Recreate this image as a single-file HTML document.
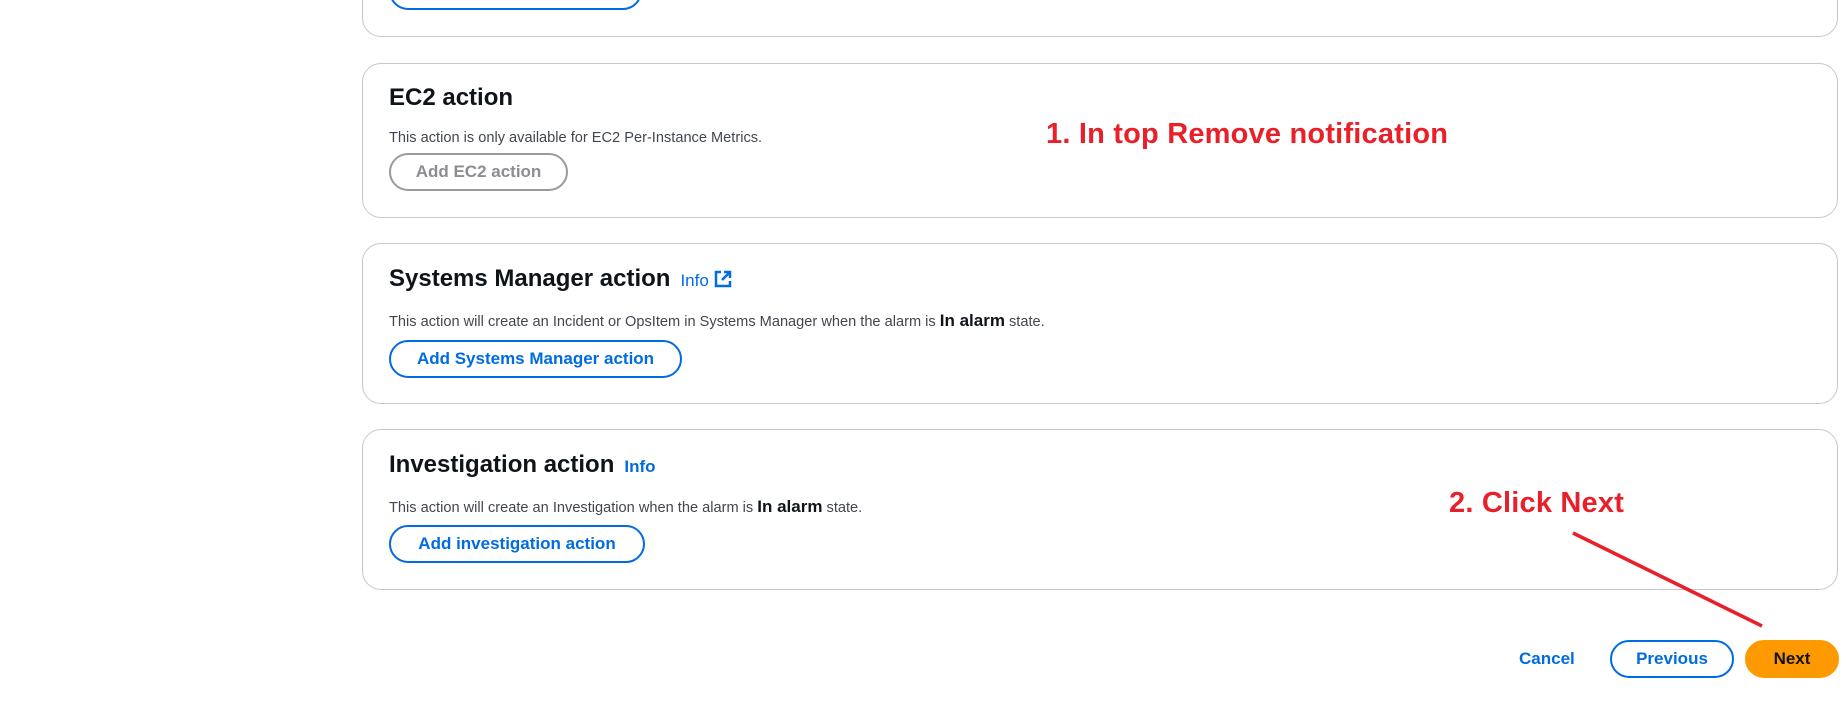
<!DOCTYPE html>
<html><head><style>
body{margin:0;width:1847px;height:702px;background:#fff;position:relative;overflow:hidden;font-family:"Liberation Sans",sans-serif;}
.card{position:absolute;left:362px;width:1476px;border:1px solid #c6c6cd;border-radius:19px;box-sizing:border-box;background:#fff;}
.h{position:absolute;left:389px;font-size:24px;font-weight:bold;color:#0f141a;}
.d{position:absolute;left:389px;font-size:14.6px;color:#424650;}
.d b{color:#0f141a;font-size:17px;}
.btn{position:absolute;left:389px;height:38px;border:2px solid #006ce0;border-radius:20px;box-sizing:border-box;color:#006ce0;font-weight:bold;font-size:17px;line-height:34px;text-align:center;}
.info{color:#006ce0;font-size:17px;font-weight:normal;margin-left:10px;}
.red{position:absolute;color:#e8202a;font-weight:bold;font-size:29px;letter-spacing:0.2px;}
</style></head><body>
<div class="card" style="top:-30px;height:67px"></div>
<div class="btn" style="top:-28px;width:253px"></div>
<div class="card" style="top:63px;height:155px"></div>
<div class="h" style="top:84px">EC2 action</div>
<div class="d" style="top:130px">This action is only available for EC2 Per-Instance Metrics.</div>
<div class="btn" style="top:153px;width:179px;border-color:#9a9aa1;color:#8c8c94">Add EC2 action</div>
<div class="card" style="top:243px;height:161px"></div>
<div class="h" style="top:265px">Systems Manager action<span class="info">Info <svg width="18" height="18" viewBox="0 0 18 18" style="vertical-align:-2px"><path d="M7 2H2v14h14v-5" fill="none" stroke="#006ce0" stroke-width="2.5"/><path d="M10 2h6v6M16 2L8 10" fill="none" stroke="#006ce0" stroke-width="2.5"/></svg></span></div>
<div class="d" style="top:311px">This action will create an Incident or OpsItem in Systems Manager when the alarm is <b>In alarm</b> state.</div>
<div class="btn" style="top:340px;width:293px">Add Systems Manager action</div>
<div class="card" style="top:429px;height:161px"></div>
<div class="h" style="top:451px">Investigation action<span class="info" style="font-weight:bold;margin-left:10px">Info</span></div>
<div class="d" style="top:497px">This action will create an Investigation when the alarm is <b>In alarm</b> state.</div>
<div class="btn" style="top:525px;width:256px">Add investigation action</div>
<div style="position:absolute;left:1519px;top:649px;font-weight:bold;font-size:17px;color:#006ce0">Cancel</div>
<div class="btn" style="left:1610px;top:640px;width:124px;height:38px">Previous</div>
<div class="btn" style="left:1745px;top:640px;width:94px;height:38px;background:#ff9900;border-color:#ff9900;color:#0f141a">Next</div>
<div class="red" style="left:1046px;top:118px">1. In top Remove notification</div>
<div class="red" style="left:1449px;top:487px">2. Click Next</div>
<svg style="position:absolute;left:0;top:0" width="1847" height="702"><line x1="1573" y1="533" x2="1762" y2="626" stroke="#e8202a" stroke-width="3.5"/></svg>
</body></html>
